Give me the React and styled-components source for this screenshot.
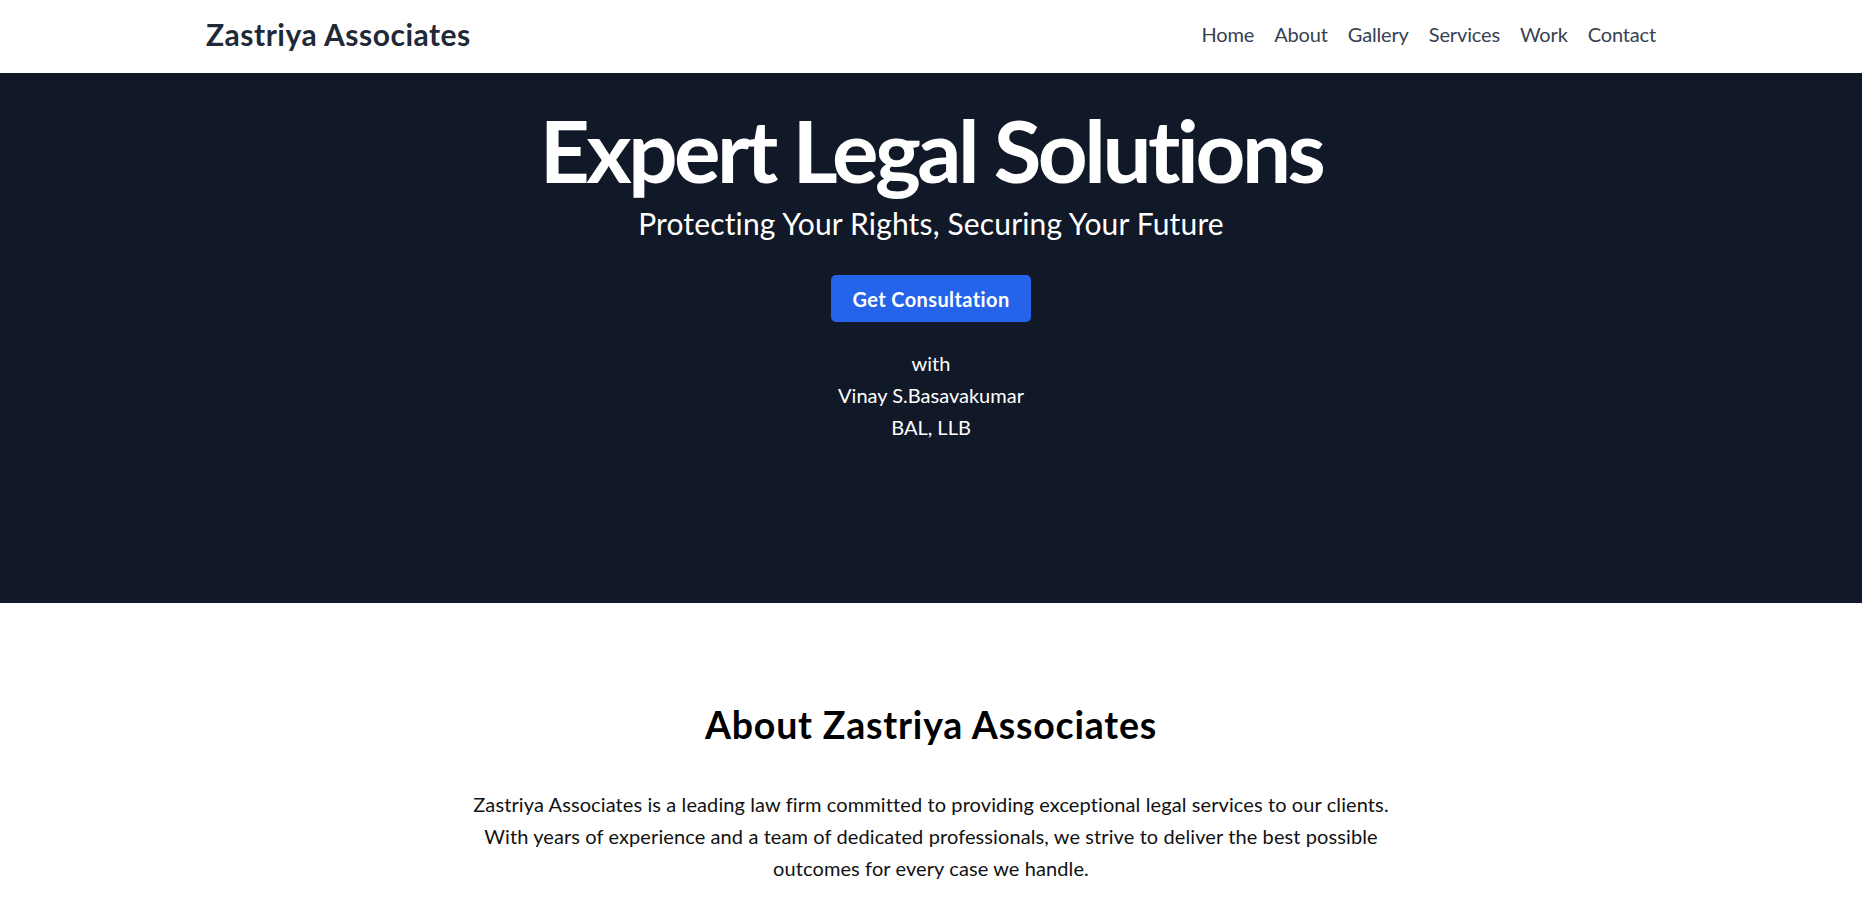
import React from "react";
import styled, { createGlobalStyle } from "styled-components";

const GlobalStyle = createGlobalStyle`
  * { box-sizing: border-box; }
  body {
    margin: 0;
    background: #ffffff;
    font-family: Lato, "Open Sans", sans-serif;
    font-variant-ligatures: none;
  }
`;

const Page = styled.div`
  display: flex;
  flex-direction: column;
`;

const NavBar = styled.header`
  height: 73px;
  background: #ffffff;
  box-shadow: 0 2px 6px rgba(0, 0, 0, 0.1);
  position: relative;
  z-index: 1;
`;

const NavInner = styled.div`
  width: 1450px;
  height: 100%;
  margin: 0 auto;
  padding-bottom: 6px;
  display: flex;
  align-items: center;
  justify-content: space-between;
`;

const Logo = styled.a`
  font-size: 30px;
  line-height: 36px;
  font-weight: 700;
  letter-spacing: 0.5px;
  color: #1f2937;
  text-decoration: none;
`;

const NavLinks = styled.nav`
  display: flex;
  gap: 20px;
`;

const NavLink = styled.a`
  font-size: 20px;
  line-height: 30px;
  letter-spacing: -0.15px;
  color: #374151;
  text-decoration: none;
`;

const Hero = styled.section`
  background: #111827;
  color: #ffffff;
  height: 530px;
  padding-top: 32px;
  display: flex;
  flex-direction: column;
  align-items: center;
  text-align: center;
`;

const HeroTitle = styled.h1`
  margin: 0;
  font-size: 87px;
  line-height: 90px;
  font-weight: 700;
  letter-spacing: -3.5px;
`;

const HeroSubtitle = styled.p`
  margin: 8px 0 0;
  font-size: 30px;
  line-height: 40px;
  font-weight: 400;
  letter-spacing: 0.15px;
`;

const CtaButton = styled.a`
  margin-top: 32px;
  height: 47px;
  padding: 0 21px;
  display: inline-flex;
  align-items: center;
  background: #2563eb;
  color: #ffffff;
  border-radius: 5px;
  font-size: 20px;
  font-weight: 700;
  letter-spacing: 0.4px;
  text-decoration: none;
`;

const Credit = styled.p`
  margin: 25px 0 0;
  font-size: 20px;
  line-height: 32px;
`;

const About = styled.section`
  padding: 99px 0 80px;
  display: flex;
  flex-direction: column;
  align-items: center;
  text-align: center;
`;

const SectionTitle = styled.h2`
  margin: 0;
  font-size: 37.5px;
  line-height: 45px;
  font-weight: 700;
  letter-spacing: 0.8px;
  color: #000000;
`;

const Paragraph = styled.p`
  margin: 41px 0 0;
  max-width: 960px;
  font-size: 20px;
  line-height: 32px;
  letter-spacing: 0.1px;
  color: #111111;
`;

const links = ["Home", "About", "Gallery", "Services", "Work", "Contact"];

export default function App() {
  return (
    <Page>
      <GlobalStyle />
      <NavBar>
        <NavInner>
          <Logo href="#">Zastriya Associates</Logo>
          <NavLinks>
            {links.map((l) => (
              <NavLink key={l} href={`#${l.toLowerCase()}`}>
                {l}
              </NavLink>
            ))}
          </NavLinks>
        </NavInner>
      </NavBar>
      <Hero>
        <HeroTitle>Expert Legal Solutions</HeroTitle>
        <HeroSubtitle>Protecting Your Rights, Securing Your Future</HeroSubtitle>
        <CtaButton href="#contact">Get Consultation</CtaButton>
        <Credit>
          with
          <br />
          Vinay S.Basavakumar
          <br />
          BAL, LLB
        </Credit>
      </Hero>
      <About>
        <SectionTitle>About Zastriya Associates</SectionTitle>
        <Paragraph>
          Zastriya Associates is a leading law firm committed to providing exceptional legal services to our clients.
          With years of experience and a team of dedicated professionals, we strive to deliver the best possible
          outcomes for every case we handle.
        </Paragraph>
      </About>
    </Page>
  );
}
